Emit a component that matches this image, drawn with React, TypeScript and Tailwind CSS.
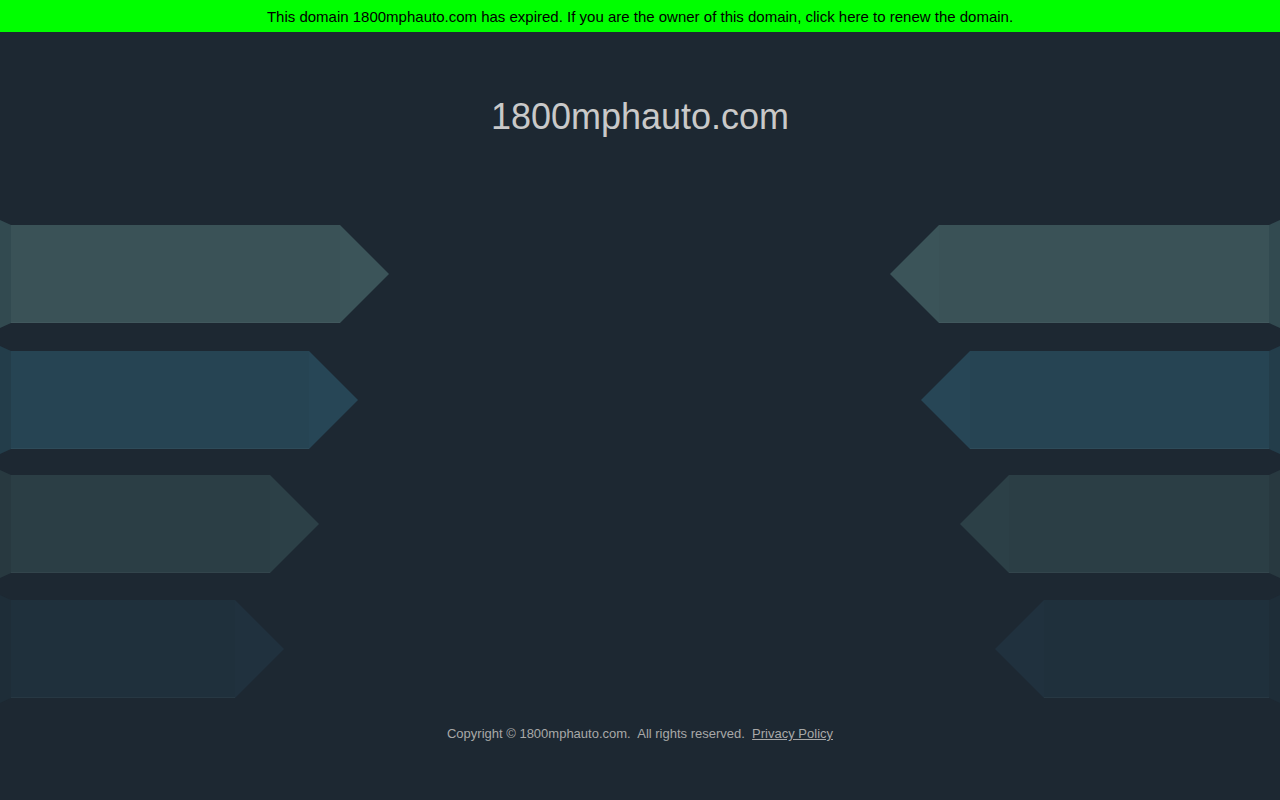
import React from "react";

type ArrowProps = {
  width: number;
  fill: string;
  tip: string;
  tab: string;
  flip?: boolean;
};

// decorative arrow: small perspective tab at the page edge, body and a pointed tip
function Arrow({ width, fill, tip, tab, flip }: ArrowProps) {
  const h = 108;
  const bodyEnd = width - 49;
  return (
    <svg
      width={width}
      height={h}
      viewBox={`0 0 ${width} ${h}`}
      className="block"
      style={flip ? { transform: "scaleX(-1)" } : undefined}
    >
      <polygon points={`0,0 11,5 11,103 0,108`} fill={tab} />
      <polygon points={`11,5 ${bodyEnd},5 ${bodyEnd},103 11,103`} fill={fill} />
      <polygon points={`${bodyEnd},5 ${width},54 ${bodyEnd},103`} fill={tip} />
      <line x1={11} y1={102.5} x2={bodyEnd} y2={102.5} stroke="rgba(255,255,255,0.04)" />
    </svg>
  );
}

const rows = [
  { left: 389, right: 390, fill: "#3a5257", tip: "#3b5459", tab: "#324a50", mt: "mt-0" },
  { left: 358, right: 359, fill: "#264453", tip: "#274656", tab: "#233d4a", mt: "mt-[18px]" },
  { left: 319, right: 320, fill: "#2b3e45", tip: "#2c4047", tab: "#283940", mt: "mt-[16px]" },
  { left: 284, right: 285, fill: "#1f303c", tip: "#20313e", tab: "#1e2d38", mt: "mt-[17px]" },
];

export default function App() {
  return (
    <div className="min-h-screen bg-[#1d2832] font-['Liberation_Sans',Arial,sans-serif] overflow-hidden">
      {/* Expired banner */}
      <div className="h-8 bg-[#00ff00] flex items-center justify-center pt-[2px] text-[15px] text-black">
        This domain 1800mphauto.com has expired. If you are the owner of this domain, click here to renew the domain.
      </div>

      {/* Title */}
      <h1 className="pt-[64px] text-center text-[36px] leading-[41px] text-[#c9c9c9]">
        1800mphauto.com
      </h1>

      {/* Arrows */}
      <div className="mt-[83px] flex flex-col">
        {rows.map((r, i) => (
          <div key={i} className={`flex justify-between ${r.mt}`}>
            <Arrow width={r.left} fill={r.fill} tip={r.tip} tab={r.tab} />
            <Arrow width={r.right} fill={r.fill} tip={r.tip} tab={r.tab} flip />
          </div>
        ))}
      </div>

      {/* Footer */}
      <div className="mt-[21px] text-center text-[13px] text-[#a8a8a8]">
        Copyright © 1800mphauto.com.&nbsp; All rights reserved.&nbsp;{" "}
        <a href="#" className="underline">Privacy Policy</a>
      </div>
    </div>
  );
}
